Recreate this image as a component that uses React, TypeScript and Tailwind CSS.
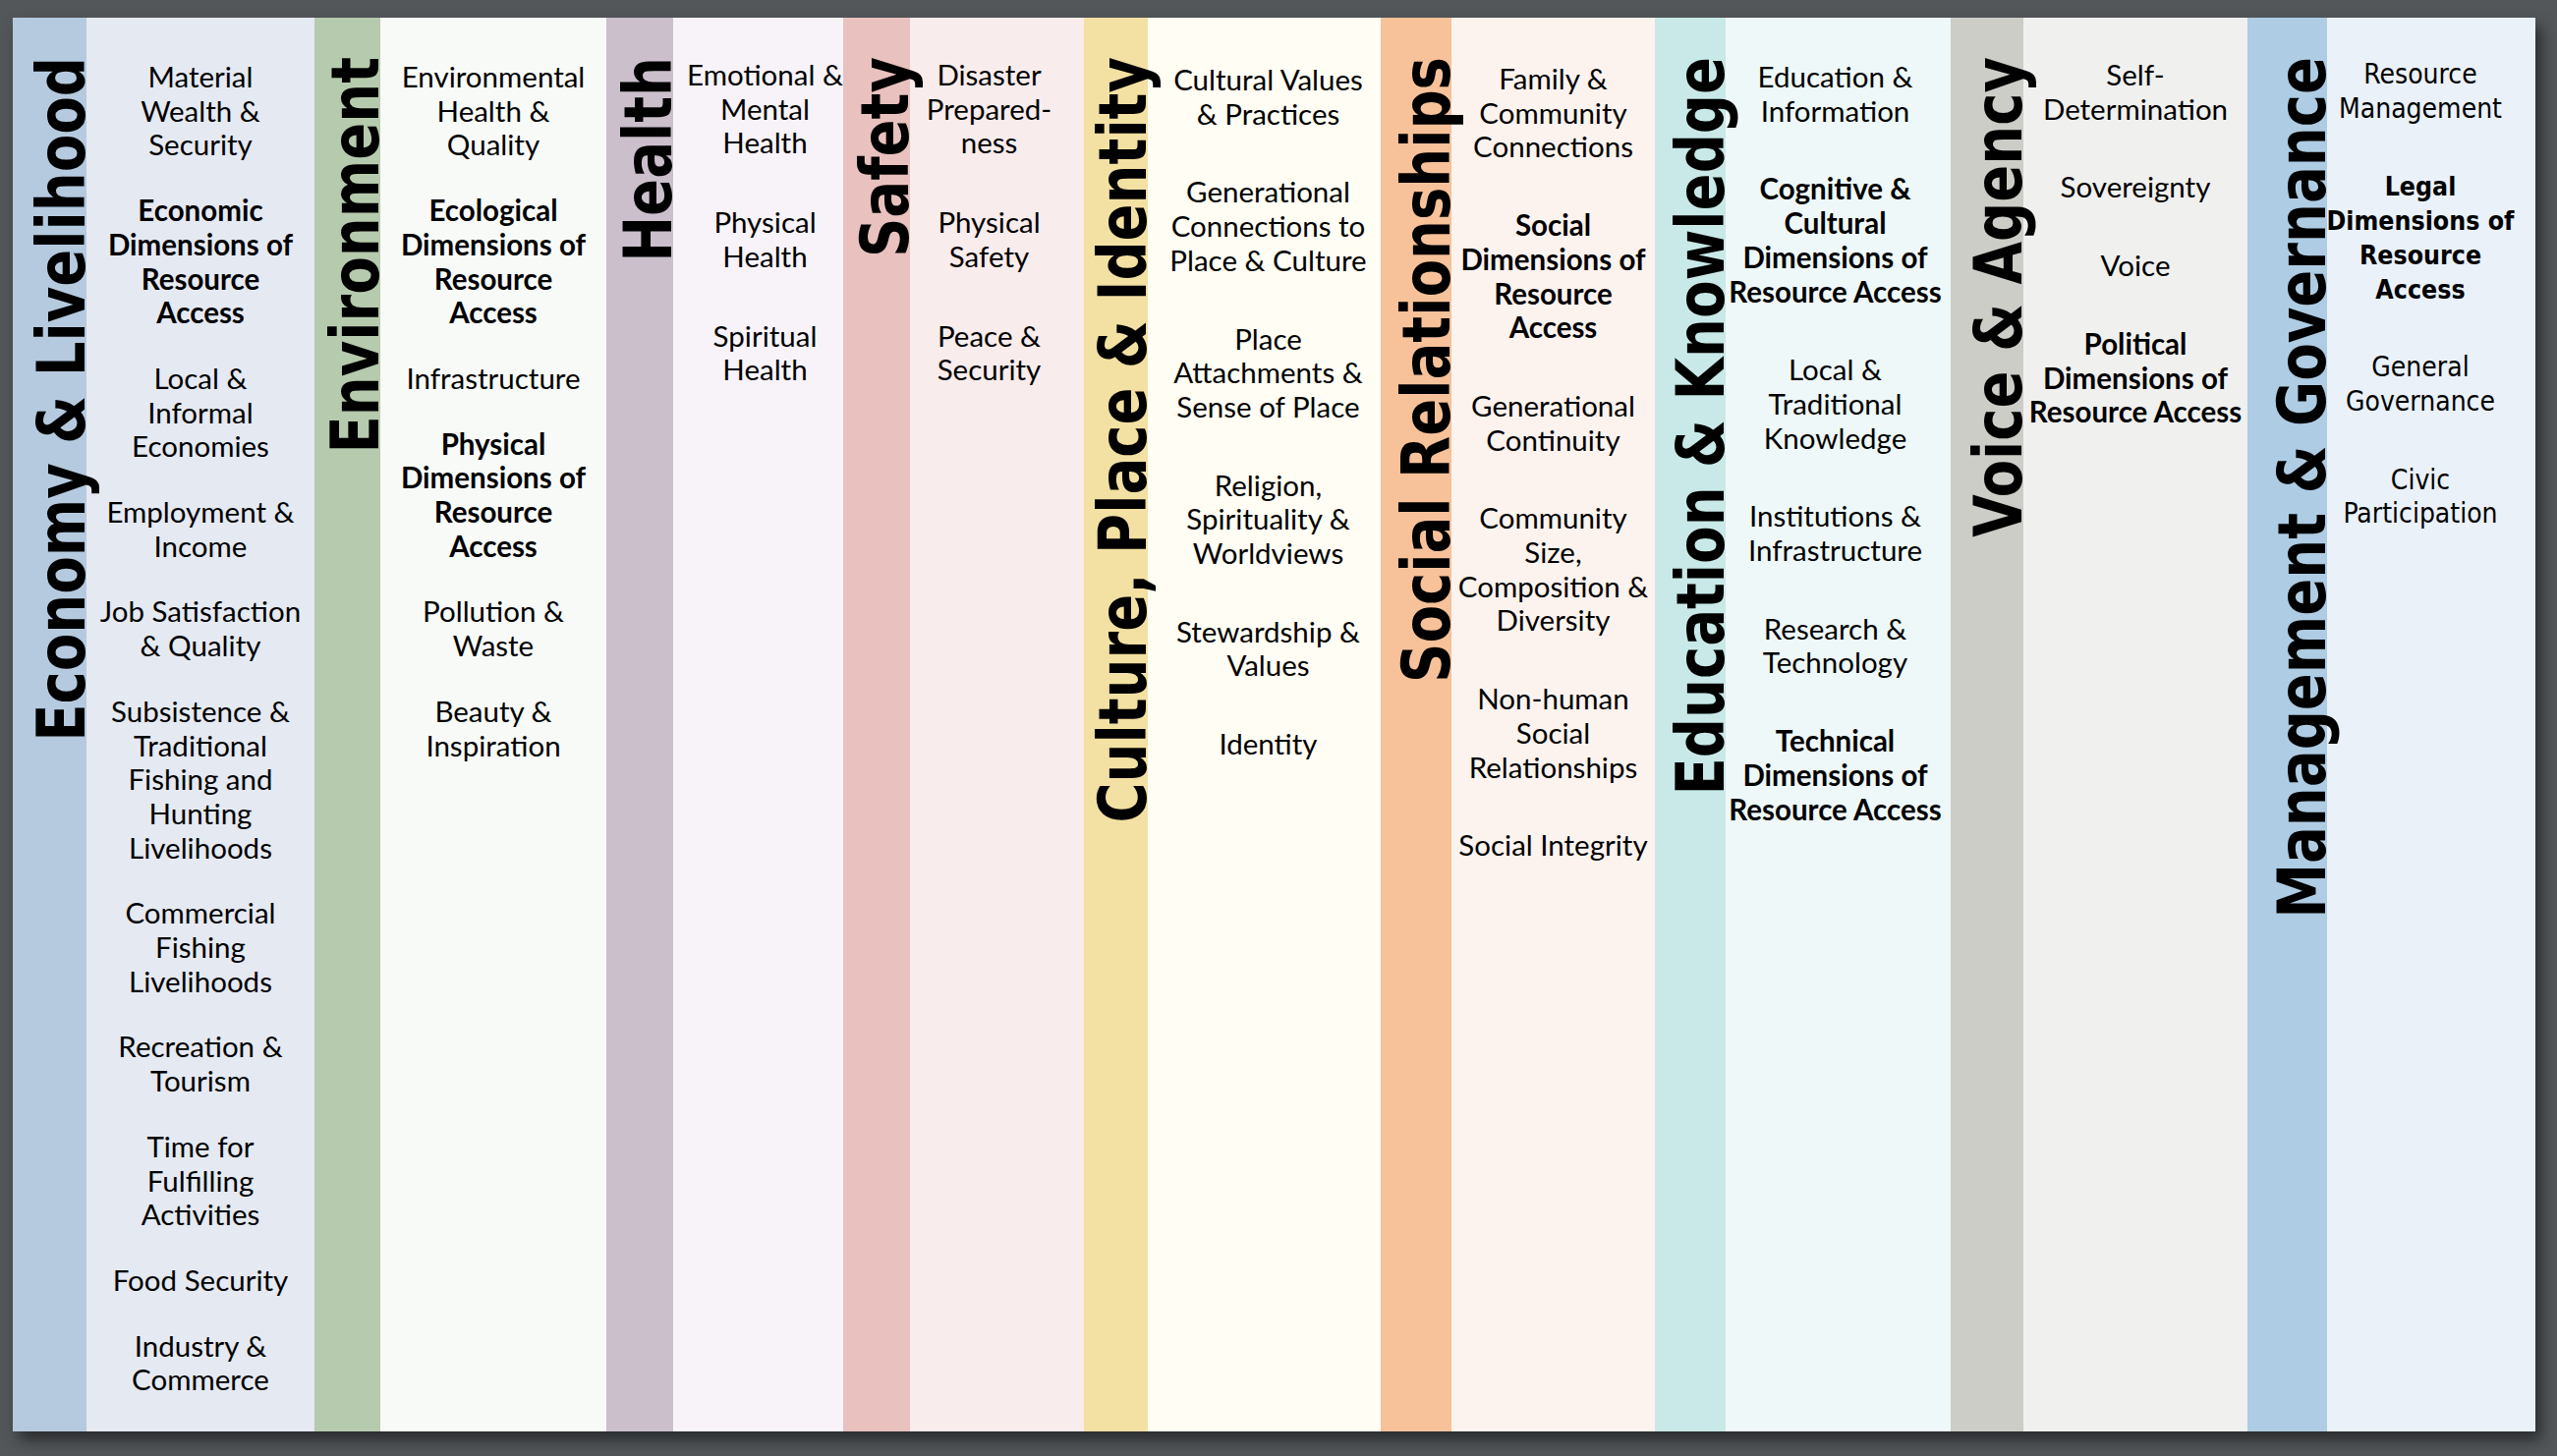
type Item = { lines: string[]; bold?: boolean };

type Column = {
  title: string;
  stripe: string;
  panel: string;
  list: string;
  font: string;
  items: Item[];
};

const access = (first: string[]): Item => ({
  lines: [...first],
  bold: true,
});

const columns: Column[] = [
  {
    title: "Economy & Livelihood",
    stripe: "w-[75px] bg-[#b5cadf]",
    panel: "w-[232px] bg-[#e5e9f2]",
    list: "gap-[32px] pt-[43px]",
    font: "calibri",
    items: [
      { lines: ["Material", "Wealth &", "Security"] },
      access(["Economic", "Dimensions of", "Resource", "Access"]),
      { lines: ["Local &", "Informal", "Economies"] },
      { lines: ["Employment &", "Income"] },
      { lines: ["Job Satisfaction", "& Quality"] },
      { lines: ["Subsistence &", "Traditional", "Fishing and", "Hunting", "Livelihoods"] },
      { lines: ["Commercial", "Fishing", "Livelihoods"] },
      { lines: ["Recreation &", "Tourism"] },
      { lines: ["Time for", "Fulfilling", "Activities"] },
      { lines: ["Food Security"] },
      { lines: ["Industry &", "Commerce"] },
    ],
  },
  {
    title: "Environment",
    stripe: "w-[67px] bg-[#b6caad]",
    panel: "w-[230px] bg-[#f8faf8]",
    list: "gap-[32px] pt-[43px]",
    font: "calibri",
    items: [
      { lines: ["Environmental", "Health &", "Quality"] },
      access(["Ecological", "Dimensions of", "Resource", "Access"]),
      { lines: ["Infrastructure"] },
      access(["Physical", "Dimensions of", "Resource", "Access"]),
      { lines: ["Pollution &", "Waste"] },
      { lines: ["Beauty &", "Inspiration"] },
    ],
  },
  {
    title: "Health",
    stripe: "w-[68px] bg-[#cbbfcc]",
    panel: "w-[173px] bg-[#f8f3f9]",
    list: "gap-[46px] pt-[41px] pl-[14px]",
    font: "calibri",
    items: [
      { lines: ["Emotional &", "Mental", "Health"] },
      { lines: ["Physical", "Health"] },
      { lines: ["Spiritual", "Health"] },
    ],
  },
  {
    title: "Safety",
    stripe: "w-[68px] bg-[#e9c1be]",
    panel: "w-[177px] bg-[#f8ecec]",
    list: "gap-[46px] pt-[41px] pr-[16px]",
    font: "calibri",
    items: [
      { lines: ["Disaster", "Prepared-", "ness"] },
      { lines: ["Physical", "Safety"] },
      { lines: ["Peace &", "Security"] },
    ],
  },
  {
    title: "Culture, Place & Identity",
    stripe: "w-[65px] bg-[#f3e0a3]",
    panel: "w-[237px] bg-[#fffdf4]",
    list: "gap-[45px] pt-[46px] pl-[8px]",
    font: "calibri",
    items: [
      { lines: ["Cultural Values", "& Practices"] },
      { lines: ["Generational", "Connections to", "Place & Culture"] },
      { lines: ["Place", "Attachments &", "Sense of Place"] },
      { lines: ["Religion,", "Spirituality &", "Worldviews"] },
      { lines: ["Stewardship &", "Values"] },
      { lines: ["Identity"] },
    ],
  },
  {
    title: "Social Relationships",
    stripe: "w-[72px] bg-[#f7c199]",
    panel: "w-[207px] bg-[#fcf3ef]",
    list: "gap-[45px] pt-[45px]",
    font: "calibri",
    items: [
      { lines: ["Family &", "Community", "Connections"] },
      access(["Social", "Dimensions of", "Resource", "Access"]),
      { lines: ["Generational", "Continuity"] },
      { lines: ["Community", "Size,", "Composition &", "Diversity"] },
      { lines: ["Non-human", "Social", "Relationships"] },
      { lines: ["Social Integrity"] },
    ],
  },
  {
    title: "Education & Knowledge",
    stripe: "w-[72px] bg-[#c8e9e7]",
    panel: "w-[229px] bg-[#eef8f8]",
    list: "gap-[45px] pt-[43px] pr-[6px]",
    font: "calibri",
    items: [
      { lines: ["Education &", "Information"] },
      access(["Cognitive &", "Cultural", "Dimensions of", "Resource Access"]),
      { lines: ["Local &", "Traditional", "Knowledge"] },
      { lines: ["Institutions &", "Infrastructure"] },
      { lines: ["Research &", "Technology"] },
      access(["Technical", "Dimensions of", "Resource Access"]),
    ],
  },
  {
    title: "Voice & Agency",
    stripe: "w-[74px] bg-[#cccdc7]",
    panel: "w-[228px] bg-[#f0f0ef]",
    list: "gap-[45px] pt-[41px]",
    font: "calibri",
    items: [
      { lines: ["Self-", "Determination"] },
      { lines: ["Sovereignty"] },
      { lines: ["Voice"] },
      access(["Political", "Dimensions of", "Resource Access"]),
    ],
  },
  {
    title: "Management & Governance",
    stripe: "w-[81px] bg-[#aecce3]",
    panel: "w-[212px] bg-[#eaf1f9]",
    list: "gap-[45px] pt-[41px] pr-[22px]",
    font: "tahoma",
    items: [
      { lines: ["Resource", "Management"] },
      access(["Legal", "Dimensions of", "Resource", "Access"]),
      { lines: ["General", "Governance"] },
      { lines: ["Civic", "Participation"] },
    ],
  },
];

function Title({ text }: { text: string }) {
  return (
    <div className="origin-top scale-y-[0.825]">
      <div className="h-max whitespace-nowrap rotate-180 font-['DejaVu_Sans',sans-serif] text-[68px] font-bold leading-[0.72] text-black [writing-mode:vertical-rl]">
        {text}
      </div>
    </div>
  );
}

export default function App() {
  return (
    <div className="h-[1482px] w-full overflow-hidden bg-[#53575a] pl-[13px] pt-[18px]">
      <div className="flex h-[1439px] w-[2567px] shadow-[6px_9px_14px_rgba(0,0,0,0.5)]">
        {columns.map((c) => {
          const tahoma = c.font === "tahoma";
          return (
            <div key={c.title} className="flex">
              <div className={`relative z-10 flex shrink-0 flex-col items-end pt-[40px] ${c.stripe}`}>
                <Title text={c.title} />
              </div>
              <div
                className={`flex shrink-0 flex-col items-center text-center text-black ${c.panel} ${c.list} ${
                  tahoma
                    ? "font-['DejaVu_Sans_Condensed','DejaVu_Sans',sans-serif] text-[28px] leading-[34.7px] font-stretch-semi-condensed"
                    : "font-['Lato',sans-serif] text-[29.5px] leading-[34.7px]"
                }`}
              >
                {c.items.map((it, i) => (
                  <p
                    key={i}
                    className={`whitespace-nowrap ${
                      it.bold ? (tahoma ? "text-[26.5px] font-bold" : "font-bold") : "font-normal"
                    }`}
                  >
                    {it.lines.map((l, j) => (
                      <span key={j} className="block">
                        {l}
                      </span>
                    ))}
                  </p>
                ))}
              </div>
            </div>
          );
        })}
      </div>
    </div>
  );
}
